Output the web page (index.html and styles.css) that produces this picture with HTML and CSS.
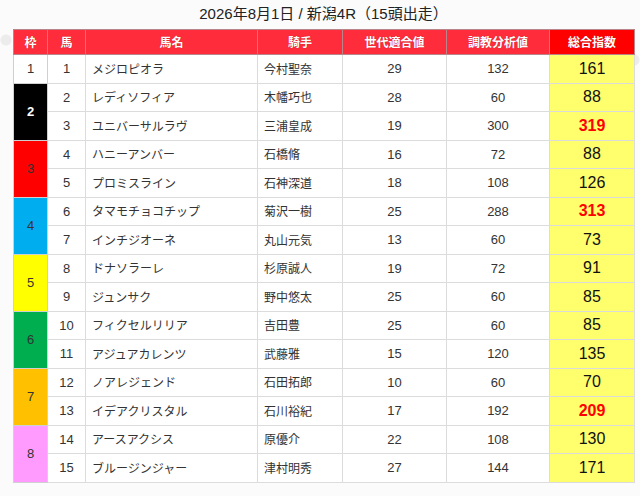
FILE: index.html
```html
<!DOCTYPE html>
<html lang="ja">
<head>
<meta charset="utf-8">
<title>新潟4R</title>
<link rel="stylesheet" href="styles.css">
</head>
<body>
<div class="page">
  <h1 class="title">2026年8月1日 / 新潟4R（15頭出走）</h1>
  <table class="race">
    <colgroup>
      <col class="c-waku"><col class="c-uma"><col class="c-name"><col class="c-jockey"><col class="c-sedai"><col class="c-chokyo"><col class="c-total">
    </colgroup>
    <thead>
      <tr>
        <th>枠</th><th>馬</th><th>馬名</th><th>騎手</th><th>世代適合値</th><th>調教分析値</th><th class="th-total">総合指数</th>
      </tr>
    </thead>
    <tbody>
      <tr><td class="waku w1">1</td><td class="num">1</td><td class="txt">メジロピオラ</td><td class="txt">今村聖奈</td><td class="num">29</td><td class="num">132</td><td class="total">161</td></tr>
      <tr><td class="waku w2" rowspan="2">2</td><td class="num">2</td><td class="txt">レディソフィア</td><td class="txt">木幡巧也</td><td class="num">28</td><td class="num">60</td><td class="total">88</td></tr>
      <tr><td class="num">3</td><td class="txt">ユニバーサルラヴ</td><td class="txt">三浦皇成</td><td class="num">19</td><td class="num">300</td><td class="total hi">319</td></tr>
      <tr><td class="waku w3" rowspan="2">3</td><td class="num">4</td><td class="txt">ハニーアンバー</td><td class="txt">石橋脩</td><td class="num">16</td><td class="num">72</td><td class="total">88</td></tr>
      <tr><td class="num">5</td><td class="txt">プロミスライン</td><td class="txt">石神深道</td><td class="num">18</td><td class="num">108</td><td class="total">126</td></tr>
      <tr><td class="waku w4" rowspan="2">4</td><td class="num">6</td><td class="txt">タマモチョコチップ</td><td class="txt">菊沢一樹</td><td class="num">25</td><td class="num">288</td><td class="total hi">313</td></tr>
      <tr><td class="num">7</td><td class="txt">インチジオーネ</td><td class="txt">丸山元気</td><td class="num">13</td><td class="num">60</td><td class="total">73</td></tr>
      <tr><td class="waku w5" rowspan="2">5</td><td class="num">8</td><td class="txt">ドナソラーレ</td><td class="txt">杉原誠人</td><td class="num">19</td><td class="num">72</td><td class="total">91</td></tr>
      <tr><td class="num">9</td><td class="txt">ジュンサク</td><td class="txt">野中悠太</td><td class="num">25</td><td class="num">60</td><td class="total">85</td></tr>
      <tr><td class="waku w6" rowspan="2">6</td><td class="num">10</td><td class="txt">フィクセルリリア</td><td class="txt">吉田豊</td><td class="num">25</td><td class="num">60</td><td class="total">85</td></tr>
      <tr><td class="num">11</td><td class="txt">アジュアカレンツ</td><td class="txt">武藤雅</td><td class="num">15</td><td class="num">120</td><td class="total">135</td></tr>
      <tr><td class="waku w7" rowspan="2">7</td><td class="num">12</td><td class="txt">ノアレジェンド</td><td class="txt">石田拓郎</td><td class="num">10</td><td class="num">60</td><td class="total">70</td></tr>
      <tr><td class="num">13</td><td class="txt">イデアクリスタル</td><td class="txt">石川裕紀</td><td class="num">17</td><td class="num">192</td><td class="total hi">209</td></tr>
      <tr><td class="waku w8" rowspan="2">8</td><td class="num">14</td><td class="txt">アースアクシス</td><td class="txt">原優介</td><td class="num">22</td><td class="num">108</td><td class="total">130</td></tr>
      <tr><td class="num">15</td><td class="txt">ブルージンジャー</td><td class="txt">津村明秀</td><td class="num">27</td><td class="num">144</td><td class="total">171</td></tr>
    </tbody>
  </table>
</div>
</body>
</html>
```

FILE: styles.css
```css
html, body {
  margin: 0;
  padding: 0;
}
body {
  background: #f6f6f6;
  font-family: "Liberation Sans", "Noto Sans CJK JP", sans-serif;
  color: #333;
}
.page {
  width: 640px;
  height: 496px;
  padding: 4px 0 0 13px;
  box-sizing: border-box;
  background:
    radial-gradient(circle at 6px 40px, #ececec 0 5px, transparent 6px),
    radial-gradient(circle at 634px 60px, #ececec 0 5px, transparent 6px),
    #fbfbfb;
}
.title {
  width: 621px;
  margin: 0 0 6px 0;
  font-size: 15px;
  font-weight: normal;
  line-height: 19px;
  text-align: center;
  color: #222;
}
.race {
  width: 621px;
  table-layout: fixed;
  border-collapse: collapse;
  background: #fff;
  font-family: "Noto Sans CJK JP", "Liberation Sans", sans-serif;
  font-size: 13px;
  border: 1px solid #cfcfcf;
}
.c-waku { width: 34px; }
.c-uma { width: 38px; }
.c-name { width: 172px; }
.c-jockey { width: 85px; }
.c-sedai { width: 104px; }
.c-chokyo { width: 103px; }
.c-total { width: 85px; }

.race th {
  height: 24px;
  padding: 0;
  background: #ff2c3b;
  color: #fff;
  font-weight: bold;
  font-size: 12px;
  text-shadow: 0 0 1px rgba(120, 0, 0, 0.6);
  border: 1px solid #b9848a;
  text-align: center;
  line-height: 1;
}
.race th.th-total {
  background: #ff0000;
}
.race td {
  height: 27.5px;
  padding: 0;
  border: 1px solid #dcdcdc;
  line-height: 1;
  color: #333;
}
.race td.num,
.race td.waku,
.race td.total {
  font-family: "Liberation Sans", "Noto Sans CJK JP", sans-serif;
}
.race td.num {
  text-align: center;
}
.race td.txt {
  text-align: left;
  padding-left: 6px;
  font-size: 12px;
}
.race td.total {
  background: #ffff6e;
  text-align: center;
  font-size: 16px;
  color: #111;
}
.race td.total.hi {
  color: #ff0000;
  font-weight: bold;
}
.race td.waku {
  text-align: center;
  border: 1px solid #d0d0d0;
}
.w1 { background: #fff; }
.w2 { background: #000; color: #fff !important; font-weight: bold; }
.w3 { background: #ff0000; }
.w4 { background: #00aeef; }
.w5 { background: #ffff00; }
.w6 { background: #00ad4f; }
.w7 { background: #ffc000; }
.w8 { background: #ff9bff; }
```
